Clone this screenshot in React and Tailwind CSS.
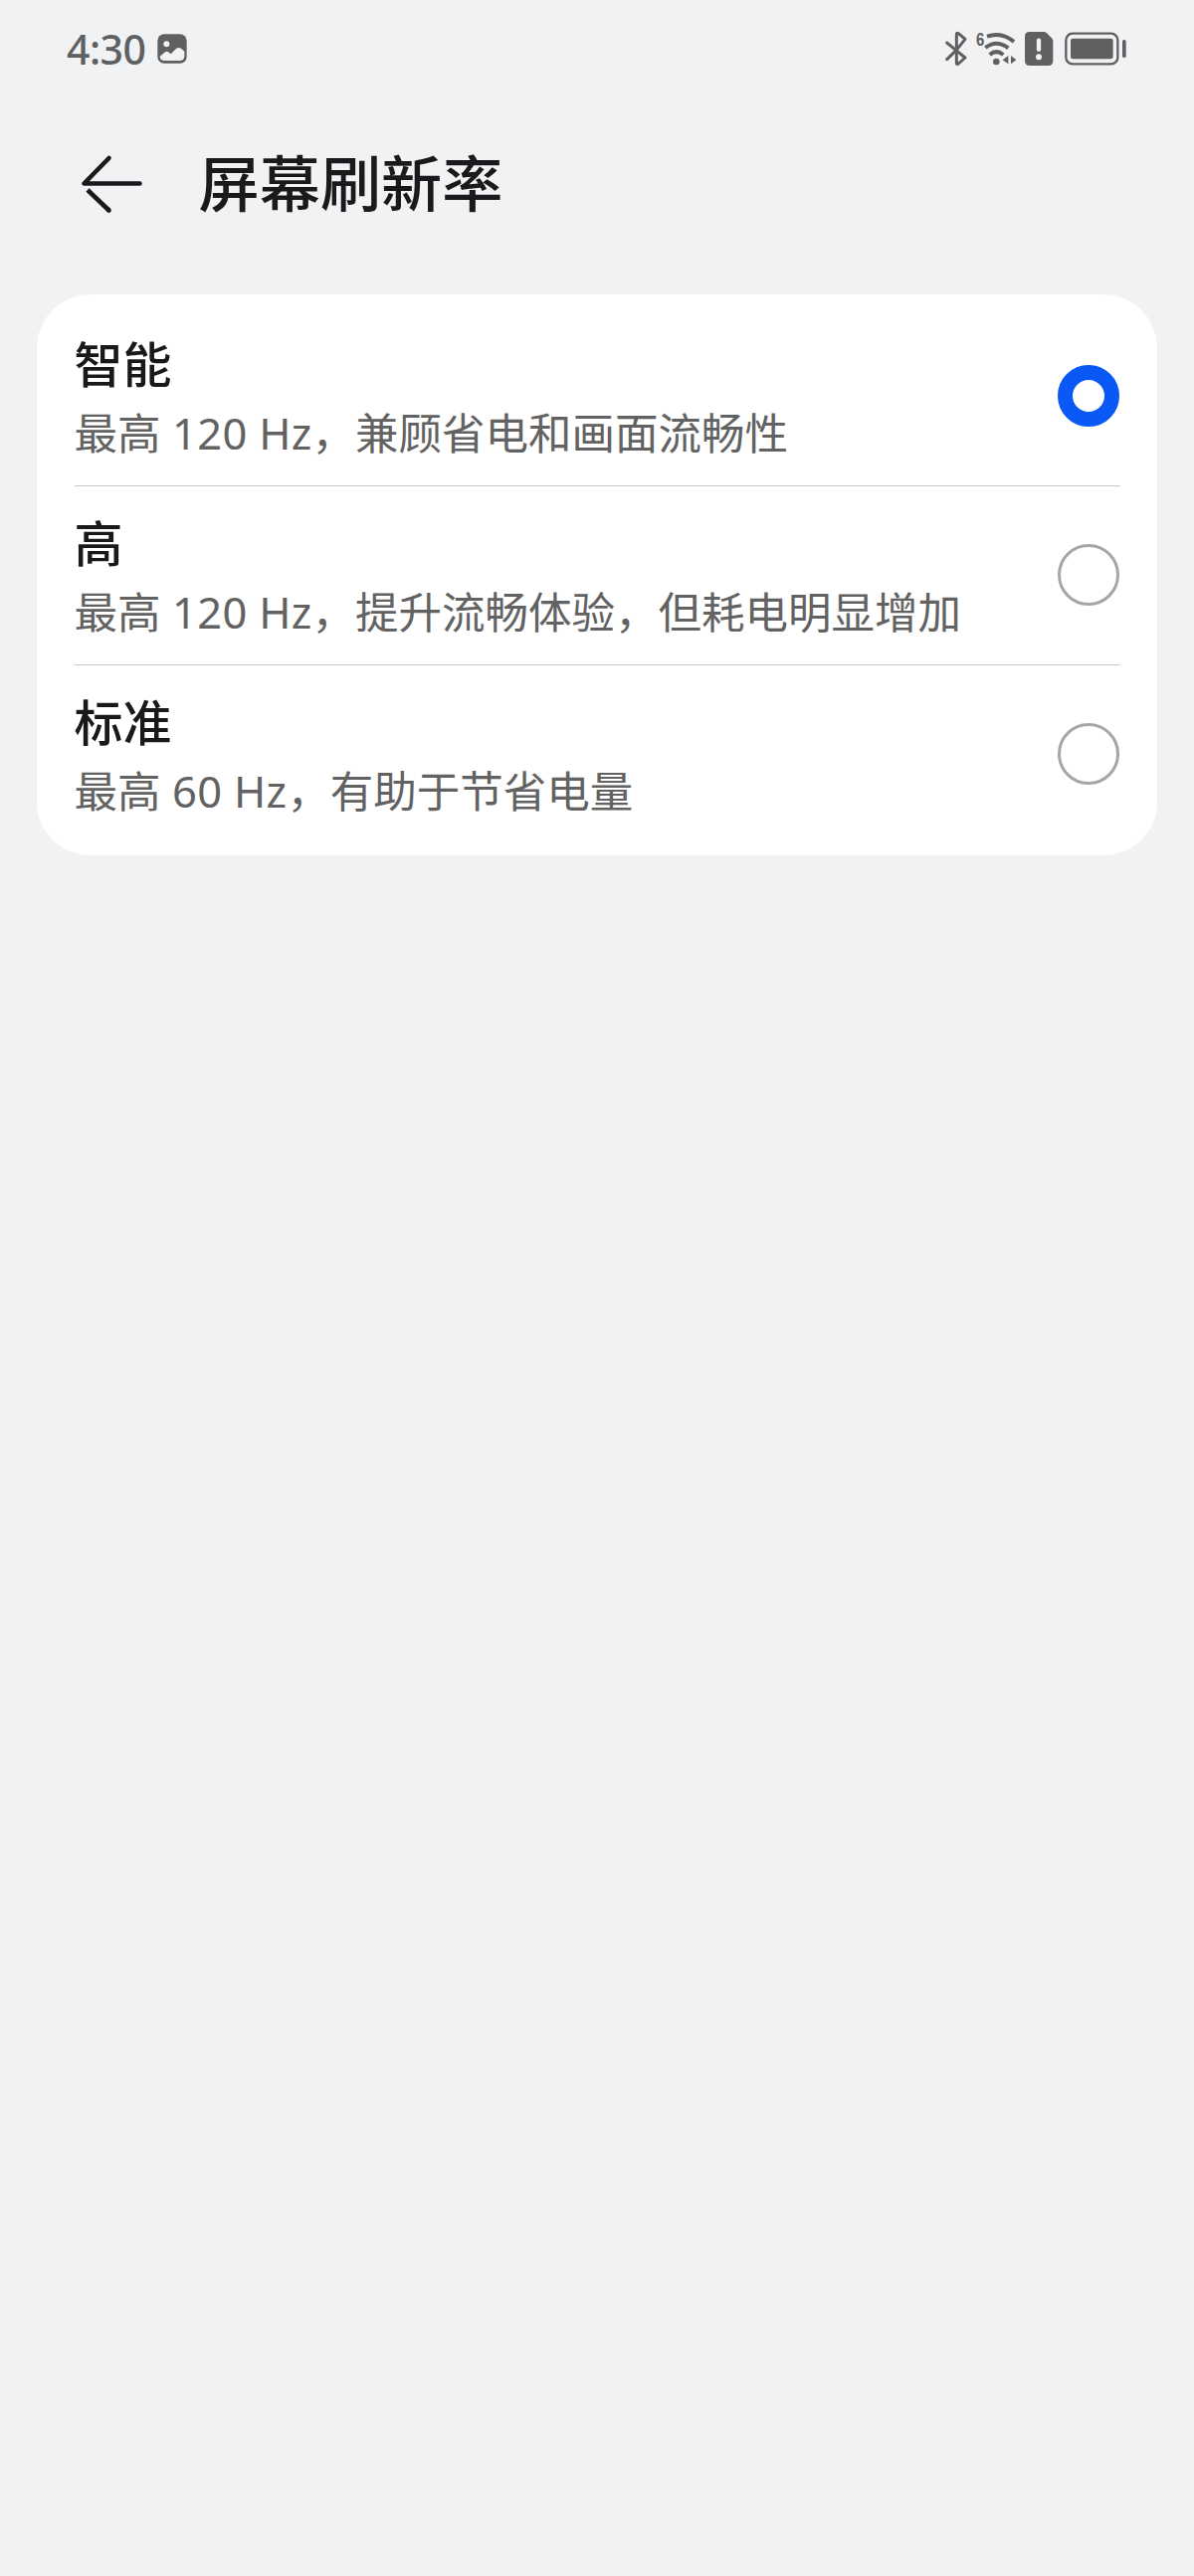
import React, { useState } from "react";

const OPTIONS = [
  { id: "smart", title: "智能", hz: " 120 Hz", desc: "，兼顾省电和画面流畅性" },
  { id: "high", title: "高", hz: " 120 Hz", desc: "，提升流畅体验，但耗电明显增加" },
  { id: "standard", title: "标准", hz: " 60 Hz", desc: "，有助于节省电量" },
];

function PictureIcon() {
  return (
    <svg className="h-[30px] w-[30px]" viewBox="0 0 90 90">
      <rect x="1" y="1" width="88" height="88" rx="20" fill="#5f6062" />
      <circle cx="28" cy="31" r="9" fill="#f1f2f4" />
      <path d="M8 68 L24 55 Q30 51 36 57 L41 61 L57 45 Q65 39 73 45 L82 53 V66 Q82 81 67 81 H23 Q9 81 8 68Z" fill="#f1f2f4" />
    </svg>
  );
}

function BluetoothIcon() {
  return (
    <svg className="h-[38px] w-6" viewBox="0 0 72 114" fill="none" stroke="#5f6062" strokeWidth="9" strokeLinecap="round" strokeLinejoin="round">
      <path d="M8 39 L36 62 L63 84 L43 102 Q37 106 37 100 V72" />
      <path d="M8 89 L36 62 L63 28 L43 11 Q37 8 37 14 V52" />
    </svg>
  );
}

function WifiIcon() {
  return (
    <svg className="h-[46px] w-[42px]" viewBox="0 -12 126 138">
      <text x="3" y="47" fontSize="56" fontWeight="700" fill="#5f6062" textLength="25" lengthAdjust="spacingAndGlyphs" fontFamily="Liberation Sans, sans-serif">6</text>
      <g fill="none" stroke="#5f6062" strokeWidth="12">
        <path d="M36 20 Q80 5 117 36" />
        <path d="M31 54 Q64 28 100 55" />
        <path d="M44 75 Q64 58 85 75" />
      </g>
      <circle cx="64" cy="96" r="10" fill="#5f6062" />
      <path d="M100 78 V103 L83 91Z M108 78 L124 91 L108 103Z" fill="#5f6062" />
    </svg>
  );
}

function SimIcon() {
  return (
    <svg className="h-[38px] w-[30px]" viewBox="0 0 90 114">
      <path d="M17 6 H60 Q65 6 69 10 L84 25 Q88 29 88 34 V93 Q88 108 73 108 H18 Q3 108 3 93 V20 Q3 6 17 6Z" fill="#5f6062" />
      <path d="M45 32 V59" stroke="#f1f2f4" strokeWidth="13" strokeLinecap="round" />
      <circle cx="45" cy="82" r="9" fill="#f1f2f4" />
    </svg>
  );
}

function BatteryIcon() {
  return (
    <svg className="h-[38px] w-16" viewBox="0 0 192 114">
      <rect x="7" y="11" width="156" height="92" rx="20" fill="none" stroke="#5f6062" strokeWidth="7" />
      <rect x="21" y="26" width="128" height="62" rx="7" fill="#5f6062" />
      <rect x="177" y="30" width="11" height="54" rx="5" fill="#5f6062" />
    </svg>
  );
}

function StatusBar() {
  return (
    <div className="flex h-[98px] items-center justify-between pr-[67px] pl-[67px]">
      <div className="flex items-center">
        <span className="w-[91px] text-[41px] leading-[38px] font-medium tracking-[-0.5px] text-[#5f6062]">4:30</span>
        <PictureIcon />
      </div>
      <div className="flex items-center">
        <BluetoothIcon />
        <div className="ml-[7px]"><WifiIcon /></div>
        <div className="ml-[7px]"><SimIcon /></div>
        <div className="ml-[10px]"><BatteryIcon /></div>
      </div>
    </div>
  );
}

function Header() {
  return (
    <div className="flex h-[174px] items-center pl-[79px]">
      <button type="button" aria-label="返回">
        <svg className="h-[62px] w-[66px]" viewBox="0 0 66 62" fill="none" stroke="#191a1c" strokeWidth="4.6" strokeLinecap="round" strokeLinejoin="round">
          <path d="M61.5 30.5 H5.5 L30.5 5" />
          <path d="M9 37 L30.5 57.5" strokeLinecap="butt" />
          <path d="M30 57 L30.5 57.5" />
        </svg>
      </button>
      <h1 className="ml-[54.5px] text-[61.2px] leading-[80px] font-medium text-[#191a1c]">屏幕刷新率</h1>
    </div>
  );
}

function Radio({ checked }) {
  if (checked) {
    return <span className="mr-px mb-px block size-[62px] shrink-0 rounded-full border-[15px] border-[#0a59f7] bg-white" />;
  }
  return <span className="mr-px mb-px block size-[62px] shrink-0 rounded-full border-[3px] border-[#a6a6a6]" />;
}

export default function App() {
  const [selected, setSelected] = useState("smart");

  return (
    <div className="h-[2590px] w-[1200px] overflow-hidden bg-[#f1f2f4] font-['Noto_Sans','Noto_Sans_CJK_SC',sans-serif]">
      <StatusBar />
      <Header />

      {/* Refresh rate options */}
      <div className="mx-[37px] mt-6 rounded-[54px] bg-white px-[37.5px] pt-[13px] pb-3">
        {OPTIONS.map((o, i) => (
          <div
            key={o.id}
            onClick={() => setSelected(o.id)}
            className={`flex items-center justify-between ${i < OPTIONS.length - 1 ? "h-[180px] border-b border-[#c8c8c8]" : "h-[179px]"}`}
          >
            <div className="pt-0.5 whitespace-nowrap">
              <div className="text-[49px] leading-[66px] font-medium text-[#191919]">{o.title}</div>
              <div className="mt-1 text-[43.5px] leading-[64px] text-[#626262]">
                最高<span className="whitespace-pre tracking-[0.3px]">{o.hz}</span>{o.desc}
              </div>
            </div>
            <Radio checked={selected === o.id} />
          </div>
        ))}
      </div>
    </div>
  );
}
